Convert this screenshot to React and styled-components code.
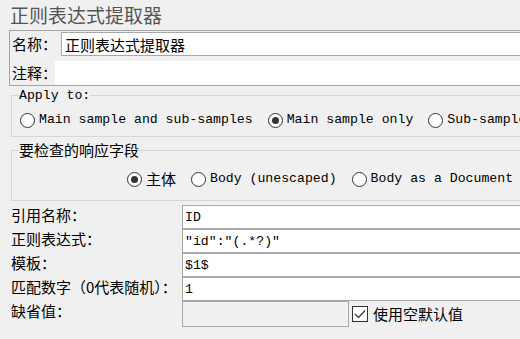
import React from "react";
import styled, { createGlobalStyle } from "styled-components";

const cjk = `"Noto Sans CJK SC", "Liberation Sans", sans-serif`;
const mono = `"Liberation Mono", "Noto Sans CJK SC", monospace`;

const GlobalStyle = createGlobalStyle`
  html, body {
    margin: 0;
    padding: 0;
    background: #f0f0f0;
    overflow: hidden;
  }
`;

const Page = styled.div`
  width: 640px;
  height: 339px;
  box-sizing: border-box;
  padding-top: 2px;
  font-family: ${cjk};
  color: #000;
`;

const Title = styled.div`
  margin-left: 10px;
  height: 28px;
  font-size: 19px;
  line-height: 26px;
  color: #555;
`;

const NamePanel = styled.div`
  margin-left: 9px;
  border: 1px solid #a5a5a5;
  border-right: none;
  padding: 1px 0 0 2px;
  display: grid;
  grid-template-columns: 43px 1fr;
  row-gap: 5px;
  align-items: center;
`;

const Label = styled.span`
  font-size: 15px;
  line-height: ${(p) => p.$lh || 24}px;
  white-space: nowrap;
`;

const TextField = styled.div`
  height: ${(p) => p.$h || 24}px;
  box-sizing: border-box;
  margin-left: ${(p) => p.$indent || 0}px;
  border: ${(p) => (p.$plain ? "none" : "1px solid #a8a8a8")};
  background: ${(p) => (p.$disabled ? "#f0f0f0" : "#fff")};
  padding-left: ${(p) => (p.$mono ? 2 : 3)}px;
  display: flex;
  align-items: center;
  white-space: nowrap;
  font-family: ${(p) => (p.$mono ? mono : cjk)};
  font-size: ${(p) => (p.$mono ? 13.2 : 15)}px;
  width: ${(p) => (p.$w ? `${p.$w}px` : "auto")};
`;

const Group = styled.fieldset`
  width: 618px;
  box-sizing: border-box;
  margin: ${(p) => p.$top}px 0 0 11px;
  padding: 0 7px ${(p) => p.$bottom}px 7px;
  border: 1px solid #d6d6d6;
  min-width: 0;
`;

const Legend = styled.legend`
  padding: 0;
  font-family: ${(p) => (p.$mono ? mono : cjk)};
  font-size: ${(p) => (p.$mono ? 13.2 : 15)}px;
  line-height: ${(p) => (p.$mono ? 15 : 18)}px;
`;

const RadioRow = styled.div`
  display: flex;
  align-items: center;
  justify-content: ${(p) => (p.$center ? "center" : "flex-start")};
  height: 16px;
  margin-top: ${(p) => p.$top}px;
  padding-left: ${(p) => (p.$center ? 0 : 1)}px;
  gap: 15px;
`;

const RadioItem = styled.label`
  display: inline-flex;
  align-items: center;
  gap: 4px;
  white-space: nowrap;
  font-family: ${(p) => (p.$mono ? mono : cjk)};
  font-size: ${(p) => (p.$mono ? 13.2 : 15)}px;
  line-height: 16px;
`;

const RadioCircle = styled.span`
  width: 15px;
  height: 15px;
  flex: none;
  box-sizing: border-box;
  border-radius: 50%;
  border: 1px solid #333;
  background: #fff;
  display: inline-flex;
  align-items: center;
  justify-content: center;

  &::after {
    content: "";
    width: 7px;
    height: 7px;
    border-radius: 50%;
    background: #333;
    display: ${(p) => (p.$checked ? "block" : "none")};
  }
`;

const Form = styled.div`
  width: 618px;
  margin: 4px 0 0 11px;
  display: grid;
  grid-template-columns: 171px 1fr;
`;

const DefaultRow = styled.div`
  display: flex;
  align-items: center;
  gap: 3px;
`;

const CheckItem = styled.label`
  display: inline-flex;
  align-items: center;
  gap: 5px;
  font-size: 15px;
  line-height: 20px;
  white-space: nowrap;
`;

const CheckBox = styled.span`
  width: 16px;
  height: 16px;
  box-sizing: border-box;
  border: 1px solid #333;
  background: #fff;
  display: inline-flex;
  align-items: center;
  justify-content: center;
`;

const Radio = ({ checked, mono, children }) => (
  <RadioItem $mono={mono}>
    <RadioCircle $checked={checked} />
    {children}
  </RadioItem>
);

const fields = [
  { label: "引用名称：", value: "ID" },
  { label: "正则表达式：", value: "\"id\":\"(.*?)\"" },
  { label: "模板：", value: "$1$" },
  { label: "匹配数字（0代表随机）：", value: "1" },
];

export default function App() {
  return (
    <Page>
      <GlobalStyle />
      <Title>正则表达式提取器</Title>

      <NamePanel>
        <Label>名称：</Label>
        <TextField $indent={6}>正则表达式提取器</TextField>
        <Label>注释：</Label>
        <TextField $plain />
      </NamePanel>

      <Group $top={2} $bottom={8}>
        <Legend $mono>Apply to:</Legend>
        <RadioRow $top={9}>
          <Radio mono>Main sample and sub-samples</Radio>
          <Radio mono checked>Main sample only</Radio>
          <Radio mono>Sub-samples only</Radio>
        </RadioRow>
      </Group>

      <Group $top={4} $bottom={13}>
        <Legend>要检查的响应字段</Legend>
        <RadioRow $top={12} $center>
          <Radio checked>主体</Radio>
          <Radio mono>Body (unescaped)</Radio>
          <Radio mono>Body as a Document</Radio>
        </RadioRow>
      </Group>

      <Form>
        {fields.map((f) => (
          <React.Fragment key={f.label}>
            <Label $lh={20}>{f.label}</Label>
            <TextField $mono>{f.value}</TextField>
          </React.Fragment>
        ))}
        <Label $lh={20}>缺省值：</Label>
        <DefaultRow>
          <TextField $disabled $w={167} $h={26} />
          <CheckItem>
            <CheckBox>
              <svg width="12" height="10" viewBox="0 0 12 10">
                <path d="M1 5 L4.5 8.5 L11 1.5" fill="none" stroke="#444" strokeWidth="1.4" />
              </svg>
            </CheckBox>
            使用空默认值
          </CheckItem>
        </DefaultRow>
      </Form>
    </Page>
  );
}
